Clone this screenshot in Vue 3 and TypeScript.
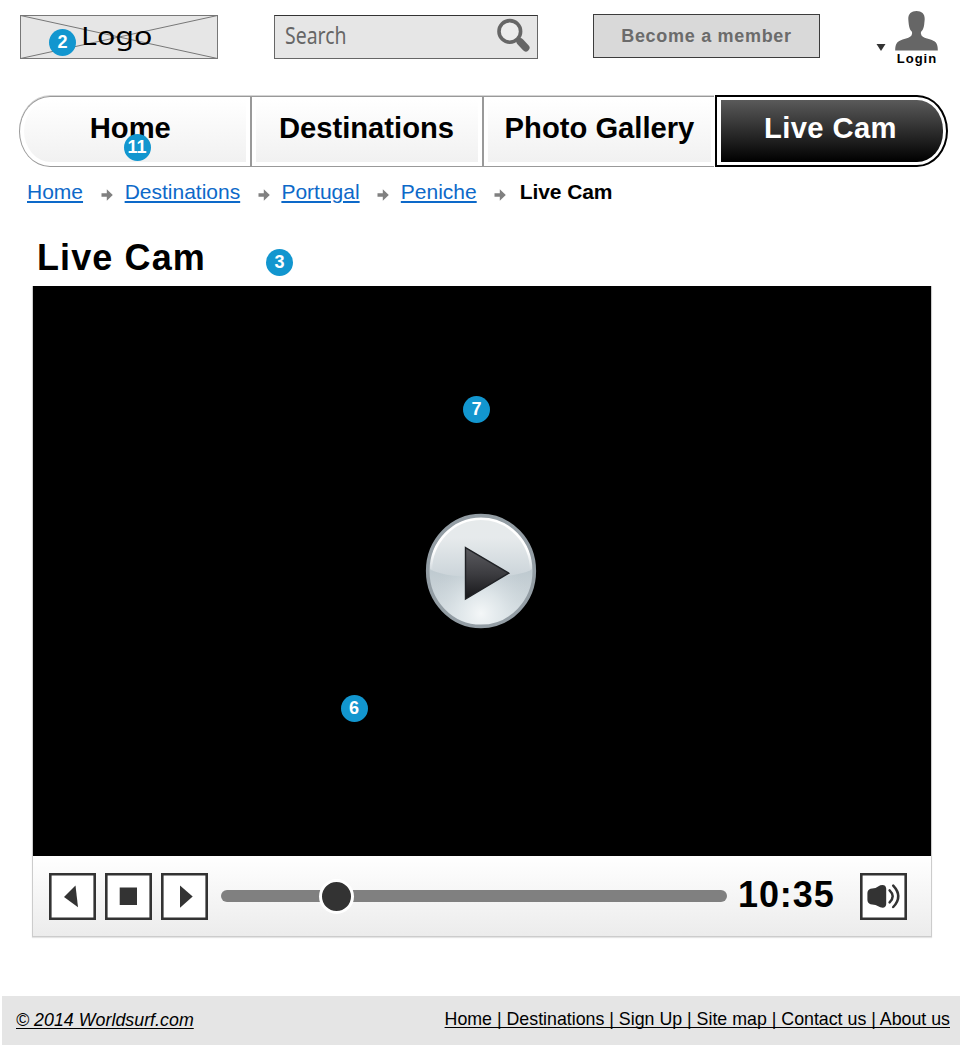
<script setup lang="ts">
interface Tab { label: string; active?: boolean }
interface Note { n: number; x: number; y: number }

const tabs: Tab[] = [
  { label: 'Home' },
  { label: 'Destinations' },
  { label: 'Photo Gallery' },
  { label: 'Live Cam', active: true },
]
const crumbs: string[] = ['Home', 'Destinations', 'Portugal', 'Peniche']
const footerLinks: string[] = ['Home', 'Destinations', 'Sign Up', 'Site map', 'Contact us', 'About us']
const notes: Note[] = [
  { n: 2, x: 62.5, y: 42 },
  { n: 11, x: 137, y: 147.5 },
  { n: 3, x: 279.5, y: 262 },
  { n: 7, x: 476.5, y: 409 },
  { n: 6, x: 354, y: 708 },
]
</script>

<template>
  <div class="page">
    <header class="top">
      <a class="logo">
        <svg class="cross" viewBox="0 0 198 44"><path d="M.5 .5L197.5 43.5M.5 43.5L197.5 .5" /><rect x=".5" y=".5" width="197" height="43" /></svg>
        <span class="logo-text">Logo</span>
      </a>
      <div class="search">
        <span class="search-text">Search</span>
        <svg class="lens" width="36" height="36" viewBox="0 0 36 36">
          <circle cx="14.8" cy="14.4" r="10.8" fill="#ececec" stroke="#666" stroke-width="3.6" />
          <path d="M22.3 21.8L25 25" stroke="#666" stroke-width="4.5" />
          <path d="M25.2 24.8L30.8 30.8" stroke="#666" stroke-width="7.4" stroke-linecap="round" />
        </svg>
      </div>
      <button class="member">Become a member</button>
      <div class="login">
        <svg class="caret" width="10" height="7" viewBox="0 0 10 7"><path d="M.5 0H9.5L5 7Z" fill="#333" /></svg>
        <div class="user">
          <svg width="43" height="40" viewBox="0 0 43 40">
            <path d="M21.5 0C26.6 0 29.9 2.7 29.7 8C29.6 10 29.5 11 29.2 13.5C28.8 16.5 28.2 18.5 26.5 20.3C25.8 21 25.8 22 26 23C26.6 25.6 28.5 26.5 32 27.6C37 29.1 40.4 30 41.7 33C42.6 35 42.8 37 42.8 39.6H.2C.2 37 .4 35 1.3 33C2.7 30 6 29.1 11 27.6C14.5 26.5 16.4 25.6 17 23C17.2 22 17.2 21 16.5 20.3C14.8 18.5 14.2 16.5 13.8 13.5C13.5 11 13.4 10 13.3 8C13.1 2.7 16.4 0 21.5 0Z" fill="#666" />
          </svg>
          <span>Login</span>
        </div>
      </div>
    </header>

    <nav class="tabs">
      <a v-for="t in tabs" :key="t.label" class="tab" :class="{ active: t.active }">
        <span class="fill">{{ t.label }}</span>
      </a>
    </nav>

    <div class="crumbs">
      <template v-for="c in crumbs" :key="c">
        <a>{{ c }}</a>
        <svg width="12" height="12" viewBox="0 0 12 12"><path d="M.5 4.2H5.8V.3L11.8 6L5.8 11.7V7.8H.5Z" fill="#808080" /></svg>
      </template>
      <b>Live Cam</b>
    </div>

    <h1>Live Cam</h1>

    <section class="player">
      <div class="screen">
        <svg width="112" height="116" viewBox="0 0 112 116">
          <defs>
            <linearGradient id="disc" x1="0" y1="0" x2="0" y2="1">
              <stop offset="0" stop-color="#d3dade" /><stop offset=".5" stop-color="#bfcad0" />
              <stop offset=".75" stop-color="#ccd5da" /><stop offset="1" stop-color="#dfe6e9" />
            </linearGradient>
            <radialGradient id="glow" cx=".5" cy=".88" r=".5">
              <stop offset="0" stop-color="#f4f7f8" /><stop offset=".4" stop-color="#e2e9ec" stop-opacity=".8" /><stop offset="1" stop-color="#cbd5da" stop-opacity="0" />
            </radialGradient>
            <linearGradient id="gloss" x1="0" y1="0" x2="0" y2="1">
              <stop offset="0" stop-color="#e6eaeb" /><stop offset=".35" stop-color="#e6eaec" /><stop offset="1" stop-color="#cbd4d9" />
            </linearGradient>
            <linearGradient id="rim" x1="0" y1="0" x2="0" y2="1">
              <stop offset="0" stop-color="#fff" /><stop offset=".3" stop-color="#fff" /><stop offset=".5" stop-color="#fff" stop-opacity="0" />
            </linearGradient>
            <linearGradient id="arrow" x1="0" y1="0" x2="0" y2="1">
              <stop offset="0" stop-color="#5b5b60" /><stop offset=".5" stop-color="#3d3d41" /><stop offset="1" stop-color="#17171a" />
            </linearGradient>
          </defs>
          <ellipse cx="56" cy="58" rx="54" ry="56" fill="url(#disc)" />
          <ellipse cx="56" cy="58" rx="54" ry="56" fill="url(#glow)" />
          <path d="M5 56C5 27 28 4 56 4S107 27 107 56C92 67 20 67 5 56Z" fill="url(#gloss)" />
          <ellipse cx="56" cy="58" rx="50.4" ry="52.4" fill="none" stroke="url(#rim)" stroke-width="3" />
          <ellipse cx="56" cy="58" rx="53.3" ry="55.4" fill="none" stroke="#939da4" stroke-width="3.6" />
          <path d="M40.5 34.6L83.8 60.2L40.5 86Z" fill="url(#arrow)" stroke="#202226" stroke-width="1.4" />
        </svg>
      </div>
      <div class="controls">
        <button class="key"><svg viewBox="0 0 47 47"><path d="M15 24L26.5 12.5L29 34.3Z" /></svg></button>
        <button class="key"><svg viewBox="0 0 47 47"><path d="M14.7 14.5H32V32H14.7Z" /></svg></button>
        <button class="key"><svg viewBox="0 0 47 47"><path d="M19 12.5L31.7 23.5L19 34.8Z" /></svg></button>
        <div class="track"><span class="thumb"></span></div>
        <span class="time">10:35</span>
        <button class="key">
          <svg viewBox="0 0 47 47">
            <path d="M10.5 15.7L15.5 15L20.3 12.3Q25.6 11 26.2 15.5V31.2Q25.7 35.8 20.3 34.3L15.5 32L10.5 31.2Q7.4 30 7.4 26.8V20.3Q7.4 17 10.5 15.7Z" />
            <path class="wave" d="M29.6 17.3Q35.8 23.3 29.6 29.4M33.2 12.6Q43.4 23.4 33.2 34" />
          </svg>
        </button>
      </div>
    </section>

    <footer>
      <a class="copy">© 2014 Worldsurf.com</a>
      <a class="links">{{ footerLinks.join(' | ') }}</a>
    </footer>

    <span v-for="m in notes" :key="m.n" class="note" :style="{ left: m.x + 'px', top: m.y + 'px' }">{{ m.n }}</span>
  </div>
</template>

<style>
body { margin: 0; background: #fff; }
</style>

<style scoped>
.page {
  position: relative;
  display: flex;
  flex-direction: column;
  width: 960px;
  height: 1045px;
  overflow: hidden;
  font-family: "Liberation Sans", Arial, sans-serif;
  color: #000;
  background: #fff;
}
button { margin: 0; padding: 0; font-family: inherit; }
svg { display: block; flex: none; }
.top { display: flex; align-items: flex-start; height: 95px; flex: none; padding-left: 20px; }
.logo { position: relative; width: 198px; height: 44px; margin-top: 15px; background: #e6e6e6; }
.cross { width: 198px; height: 44px; fill: none; stroke: #777; stroke-width: 1; }
.logo-text {
  position: absolute;
  left: 61px;
  top: 3px;
  font: 26px/34px "Noto Sans", sans-serif;
  transform: scaleX(1.17);
  transform-origin: 0 0;
}
.search {
  display: flex;
  justify-content: space-between;
  box-sizing: border-box;
  width: 264px;
  height: 44px;
  margin: 15px 0 0 56px;
  border: 1px solid #666;
  border-top-color: #333;
  background: #e6e6e6;
}
.search-text {
  width: 80px;
  margin-left: 10px;
  margin-top: 2px;
  font: 24px/34px "Noto Sans", sans-serif;
  color: #666;
  transform: scaleX(.81);
  transform-origin: 0 0;
}
.lens { margin: 1px 6px 0 0; }
.member {
  box-sizing: border-box;
  width: 227px;
  height: 44px;
  margin: 14px 0 0 55px;
  border: 1px solid #3c3c3c;
  background: #d9d9d9;
  color: #6b6b6b;
  font-size: 18px;
  font-weight: 700;
  letter-spacing: .7px;
}
.login { display: flex; margin: 11px 0 0 56px; }
.caret { margin-top: 33px; }
.user { display: flex; flex-direction: column; align-items: center; margin-left: 8.5px; }
.user span { font-size: 13px; line-height: 16px; font-weight: 700; letter-spacing: 1px; margin-left: 2px; }

.tabs { display: flex; flex: none; height: 72px; margin-left: 18.6px; }
.tab {
  box-sizing: border-box;
  display: flex;
  width: 232px;
  height: 71px;
  padding: 3px 4px 4px;
  margin-top: 1px;
  border: solid #999;
  border-width: 1px 0 1px 2px;
  box-shadow: 0 -1px 0 #d4d4d4;
}
.tab:first-child { width: 231.4px; border-left-width: 1px; border-radius: 31px 0 0 31px / 35.5px 0 0 35.5px; }
.fill {
  flex: 1;
  text-align: center;
  font-size: 29.2px;
  line-height: 57px;
  font-weight: 700;
  background: linear-gradient(#fff, #f1f1f1);
}
.tab:first-child .fill { border-radius: 27px 0 0 27px / 31px 0 0 31px; padding-right: 9px; }
.tab:nth-child(2) .fill { padding-right: 1px; }
.tab:nth-child(3) { padding-right: 3px; }
.tab.active {
  width: 233px;
  height: 72px;
  margin: 0 0 0 1px;
  padding: 3px 3px 3px 4px;
  border: 2px solid #000;
  border-radius: 0 31px 31px 0 / 0 36px 36px 0;
  box-shadow: none;
}
.active .fill {
  padding-right: 3px;
  color: #fff;
  letter-spacing: .4px;
  line-height: 57px;
  background: linear-gradient(#5a5a5a, #000);
  border-radius: 0 26px 26px 0 / 0 30px 30px 0;
}

.crumbs { display: flex; height: 50px; flex: none; padding: 13px 0 0 27px; font-size: 21px; line-height: 24px; box-sizing: border-box; }
.crumbs a { color: #0d69c9; text-decoration: underline; text-decoration-thickness: 1.5px; text-underline-offset: 2px; }
.crumbs svg { margin: 9px 12px 0 17.6px; }
.crumbs b { margin-left: 1.5px; letter-spacing: -.1px; }
.crumbs a:nth-of-type(n + 3) { margin-left: -.4px; }
h1 { margin: 20px 0 0 37px; height: 49px; flex: none; font-size: 36px; line-height: 42px; letter-spacing: 1.1px; }

.player { width: 898px; flex: none; margin-left: 32px; border: 1px solid #ccc; border-top: 0; box-shadow: 0 1px 1px #e4e4e4; }
.screen { display: flex; align-items: center; justify-content: center; height: 570px; background: #000; }
.screen svg { margin: 0 0 0 -2px; }
.controls {
  display: flex;
  align-items: center;
  box-sizing: border-box;
  height: 80px;
  padding: 0 0 0 16px;
  background: linear-gradient(#fff, #ececec);
}
.key { width: 47px; height: 47px; margin-right: 9px; border: 0; background: #fff; box-shadow: inset 0 0 0 2.6px #333; }
.key svg { width: 47px; height: 47px; fill: #333; }
.wave { fill: none; stroke: #333; stroke-width: 2.5; stroke-linecap: round; }
.track { position: relative; width: 506px; height: 12px; margin-left: 4px; border-radius: 6px; background: #808080; }
.thumb { position: absolute; left: 98px; top: -11.5px; width: 29px; height: 29px; border: 3px solid #fff; border-radius: 50%; background: #333; }
.time { width: 122px; margin: -3px 0 0 11px; font-size: 36px; line-height: 42px; font-weight: 700; letter-spacing: .9px; }

footer {
  display: flex;
  justify-content: space-between;
  box-sizing: border-box;
  height: 49px;
  margin: auto 0 0 2px;
  padding: 13px 10px 0 14px;
  background: #e5e5e5;
  font-size: 17.8px;
  line-height: 20px;
  text-decoration-thickness: 1.3px;
}
footer a { text-decoration: underline; text-decoration-skip-ink: none; text-underline-offset: 2px; }
.copy { font-style: italic; padding-top: 1px; letter-spacing: .03px; }
.note {
  position: absolute;
  width: 27px;
  height: 27px;
  margin: -13.5px 0 0 -13.5px;
  border-radius: 50%;
  background: #1296cf;
  color: #fff;
  font-size: 18px;
  line-height: 27px;
  font-weight: 700;
  text-align: center;
}
</style>
